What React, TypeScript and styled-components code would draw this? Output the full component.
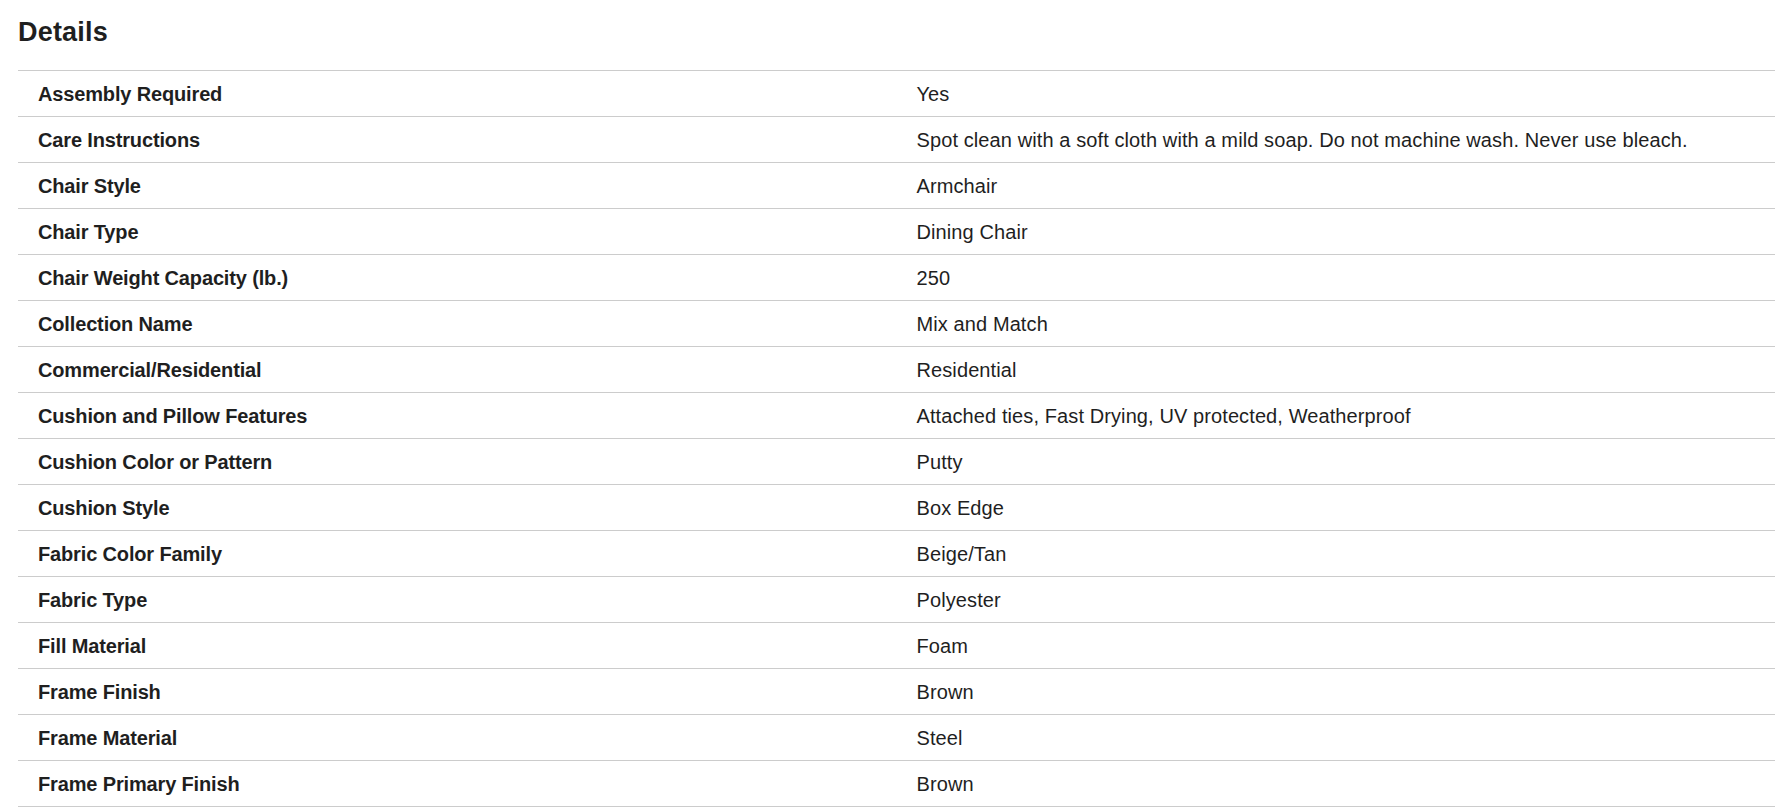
import React from "react";
import styled, { createGlobalStyle } from "styled-components";

const GlobalStyle = createGlobalStyle`
  body {
    margin: 0;
    background: #ffffff;
    color: #1f1f1f;
    font-family: "Liberation Sans", Arial, sans-serif;
  }
`;

const Page = styled.section`
  padding: 14px 14px 0 18px;
`;

const Title = styled.h2`
  margin: 0 0 20px;
  font-size: 27px;
  line-height: 36px;
  font-weight: 700;
  letter-spacing: 0.2px;
`;

const Table = styled.div`
  display: flex;
  flex-flow: column nowrap;
  border-top: 1px solid #cccccc;
`;

const Row = styled.div`
  display: grid;
  grid-template-columns: 1fr 1fr;
  height: 45px;
  align-items: center;
  border-bottom: 1px solid #cccccc;
`;

const Cell = styled.span<{ $bold?: boolean }>`
  padding: 0 20px;
  font-size: 20px;
  line-height: 24px;
  font-weight: ${(p) => (p.$bold ? 700 : 400)};
  letter-spacing: ${(p) => (p.$bold ? "-0.15px" : "0.1px")};
`;

const specs: [string, string][] = [
  ["Assembly Required", "Yes"],
  [
    "Care Instructions",
    "Spot clean with a soft cloth with a mild soap. Do not machine wash. Never use bleach.",
  ],
  ["Chair Style", "Armchair"],
  ["Chair Type", "Dining Chair"],
  ["Chair Weight Capacity (lb.)", "250"],
  ["Collection Name", "Mix and Match"],
  ["Commercial/Residential", "Residential"],
  [
    "Cushion and Pillow Features",
    "Attached ties, Fast Drying, UV protected, Weatherproof",
  ],
  ["Cushion Color or Pattern", "Putty"],
  ["Cushion Style", "Box Edge"],
  ["Fabric Color Family", "Beige/Tan"],
  ["Fabric Type", "Polyester"],
  ["Fill Material", "Foam"],
  ["Frame Finish", "Brown"],
  ["Frame Material", "Steel"],
  ["Frame Primary Finish", "Brown"],
];

export default function App() {
  return (
    <>
      <GlobalStyle />
      <Page>
        <Title>Details</Title>
        <Table>
          {specs.map(([label, value]) => (
            <Row key={label}>
              <Cell $bold>{label}</Cell>
              <Cell>{value}</Cell>
            </Row>
          ))}
        </Table>
      </Page>
    </>
  );
}
